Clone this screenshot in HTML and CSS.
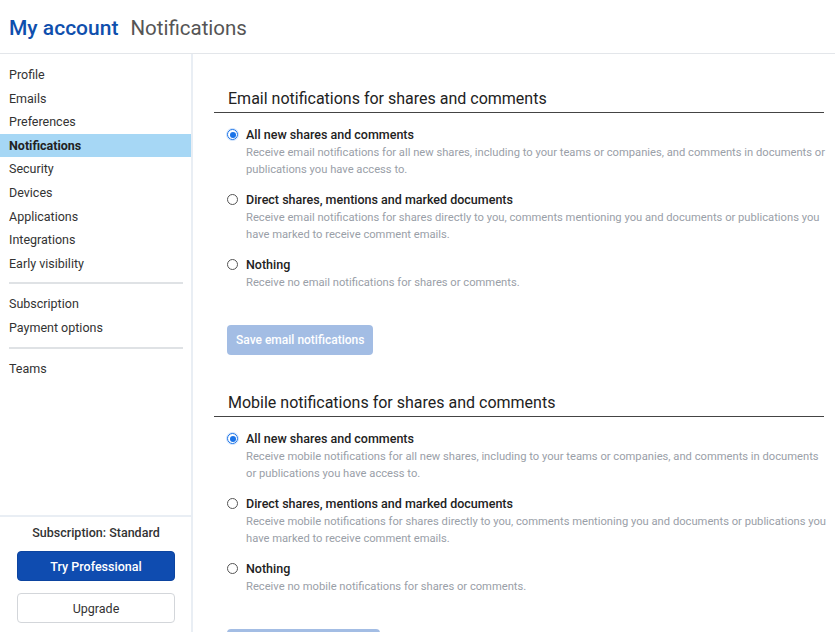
FILE: index.html
```html
<!DOCTYPE html>
<html>
<head>
<meta charset="utf-8">
<link rel="stylesheet" href="styles.css">
</head>
<body>
<header class="topbar">
  <h1 class="title"><span class="title-main">My account</span><span class="title-sub">Notifications</span></h1>
</header>
<div class="layout">
  <aside class="sidebar">
    <nav class="nav">
      <a class="nav-item">Profile</a>
      <a class="nav-item">Emails</a>
      <a class="nav-item">Preferences</a>
      <a class="nav-item active">Notifications</a>
      <a class="nav-item">Security</a>
      <a class="nav-item">Devices</a>
      <a class="nav-item">Applications</a>
      <a class="nav-item">Integrations</a>
      <a class="nav-item">Early visibility</a>
      <hr class="nav-sep">
      <a class="nav-item">Subscription</a>
      <a class="nav-item">Payment options</a>
      <hr class="nav-sep">
      <a class="nav-item">Teams</a>
    </nav>
    <div class="plan">
      <div class="plan-label">Subscription: Standard</div>
      <button class="btn-primary">Try Professional</button>
      <button class="btn-outline">Upgrade</button>
    </div>
  </aside>
  <main class="content">
    <section class="group">
      <h2 class="group-title">Email notifications for shares and comments</h2>
      <div class="options">
        <label class="option">
          <span class="radio checked"></span>
          <span class="option-text">
            <span class="option-label">All new shares and comments</span>
            <span class="option-desc">Receive email notifications for all new shares, including to your teams or companies, and comments in documents or publications you have access to.</span>
          </span>
        </label>
        <label class="option">
          <span class="radio"></span>
          <span class="option-text">
            <span class="option-label">Direct shares, mentions and marked documents</span>
            <span class="option-desc">Receive email notifications for shares directly to you, comments mentioning you and documents or publications you have marked to receive comment emails.</span>
          </span>
        </label>
        <label class="option">
          <span class="radio"></span>
          <span class="option-text">
            <span class="option-label">Nothing</span>
            <span class="option-desc">Receive no email notifications for shares or comments.</span>
          </span>
        </label>
      </div>
      <button class="btn-save">Save email notifications</button>
    </section>
    <section class="group">
      <h2 class="group-title">Mobile notifications for shares and comments</h2>
      <div class="options">
        <label class="option">
          <span class="radio checked"></span>
          <span class="option-text">
            <span class="option-label">All new shares and comments</span>
            <span class="option-desc">Receive mobile notifications for all new shares, including to your teams or companies, and comments in documents or publications you have access to.</span>
          </span>
        </label>
        <label class="option">
          <span class="radio"></span>
          <span class="option-text">
            <span class="option-label">Direct shares, mentions and marked documents</span>
            <span class="option-desc">Receive mobile notifications for shares directly to you, comments mentioning you and documents or publications you have marked to receive comment emails.</span>
          </span>
        </label>
        <label class="option">
          <span class="radio"></span>
          <span class="option-text">
            <span class="option-label">Nothing</span>
            <span class="option-desc">Receive no mobile notifications for shares or comments.</span>
          </span>
        </label>
      </div>
      <button class="btn-save">Save mobile notifications</button>
    </section>
  </main>
</div>
</body>
</html>
```
FILE: styles.css
```css
* { box-sizing: border-box; }
html, body { margin: 0; padding: 0; height: 100%; overflow: hidden; }
body {
  font-family: Roboto, "Noto Sans", sans-serif;
  color: #222;
  background: #fff;
  display: flex;
  flex-direction: column;
}
.topbar {
  height: 54px;
  border-bottom: 1px solid #e3e6ea;
  display: flex;
  align-items: center;
  padding: 3px 0 0 9px;
  flex-shrink: 0;
}
.title { margin: 0; font-size: 21px; font-weight: 400; line-height: 1; }
.title-main { color: #0f4fad; font-weight: 500; margin-right: 12px; }
.title-sub { color: #555; font-size: 20.5px; }
.layout { flex: 1; display: flex; min-height: 0; }
.sidebar {
  width: 193px;
  flex-shrink: 0;
  border-right: 2px solid #e9eef4;
  display: flex;
  flex-direction: column;
  justify-content: space-between;
}
.nav { display: flex; flex-direction: column; padding-top: 9px; }
.nav-item {
  display: block;
  font-size: 12.5px;
  line-height: 23.6px;
  padding-left: 9px;
  color: #333;
  cursor: pointer;
}
.nav-item.active { background: #a6d7f5; font-weight: 700; color: #222; }
.nav-sep {
  border: 0;
  border-top: 2px solid #dfe2e5;
  margin: 7px 8px 8px 9px;
}
.plan {
  border-top: 2px solid #e9eef4;
  padding: 6px 16px 9px 17px;
  display: flex;
  flex-direction: column;
  align-items: stretch;
}
.plan-label { text-align: center; font-size: 12.5px; font-weight: 500; color: #333; line-height: 20px; margin-bottom: 8px; }
.btn-primary, .btn-outline, .btn-save {
  font-family: inherit;
  font-size: 12.5px;
  height: 30px;
  border-radius: 4px;
  cursor: pointer;
}
.btn-primary {
  background: #0f4cb0;
  color: #fff;
  border: 1px solid #0c44a0;
  font-weight: 500;
  margin-bottom: 12px;
}
.btn-outline {
  background: #fff;
  color: #333;
  border: 1px solid #d3d6da;
}
.content { flex: 1; padding: 34px 8px 0 21px; min-width: 0; }
.group { margin-bottom: 37px; }
.group-title {
  margin: 0 3px 0 0;
  font-size: 16px;
  font-weight: 400;
  color: #222;
  line-height: 22px;
  padding: 0 0 2px 14px;
  border-bottom: 1px solid #444;
}
.options { padding: 14px 0 0 13px; }
.option { display: flex; align-items: flex-start; margin-bottom: 14px; cursor: pointer; }
.radio {
  width: 11px; height: 11px;
  border: 1px solid #555;
  border-radius: 50%;
  margin: 2px 7px 0 0;
  flex-shrink: 0;
  position: relative;
}
.radio.checked { border: 1px solid #1a73e8; box-shadow: 0 0 0 1px #cfe2fb; }
.radio.checked::after {
  content: "";
  position: absolute;
  left: 1.5px; top: 1.5px;
  width: 6px; height: 6px;
  border-radius: 50%;
  background: #1a73e8;
}
.option-text { display: flex; flex-direction: column; padding-left: 1px; }
.option-label { font-size: 12.5px; line-height: 16px; color: #222; font-weight: 500; }
.option-desc { font-size: 11.2px; line-height: 17px; color: #9aa0a8; margin-top: 1px; }
.btn-save {
  margin: 20px 0 0 13px;
  background: #a3bde4;
  color: #fff;
  border: 0;
  font-weight: 500;
  font-size: 12px;
  padding: 0 9px;
}
```
